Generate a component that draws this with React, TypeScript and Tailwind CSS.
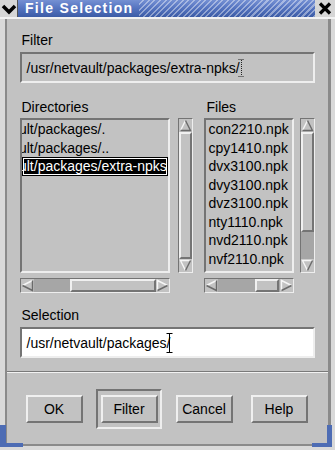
import React from 'react';

const FONT = "font-['Liberation_Sans',Arial,Helvetica,sans-serif]";
const sunken = 'border-2 border-t-[#747474] border-l-[#747474] border-b-[#eeeeee] border-r-[#eeeeee]';
const raised = 'border-2 border-t-[#f0f0f0] border-l-[#f0f0f0] border-b-[#747474] border-r-[#747474]';
const thinSunken = 'border border-t-[#747474] border-l-[#747474] border-b-[#eeeeee] border-r-[#eeeeee]';

type Dir = 'up' | 'down' | 'left' | 'right';

const ARROWS: Record<Dir, { fill: string; light: string; dark: string }> = {
  up: { fill: '6.5,1.5 1.5,11.5 11.5,11.5', light: '1.5,11.5 6.5,1.5', dark: '6.5,1.5 11.5,11.5 1.5,11.5' },
  down: { fill: '1.5,1.5 11.5,1.5 6.5,11.5', light: '6.5,11.5 1.5,1.5 11.5,1.5', dark: '11.5,1.5 6.5,11.5' },
  left: { fill: '1.5,6.5 11.5,1.5 11.5,11.5', light: '1.5,6.5 11.5,1.5', dark: '11.5,1.5 11.5,11.5 1.5,6.5' },
  right: { fill: '1.5,1.5 11.5,6.5 1.5,11.5', light: '1.5,11.5 1.5,1.5 11.5,6.5', dark: '11.5,6.5 1.5,11.5' },
};

function Arrow({ dir }: { dir: Dir }) {
  const a = ARROWS[dir];
  return (
    <svg width="13" height="13" viewBox="0 0 13 13" className="block shrink-0">
      <polygon points={a.fill} fill="#c2c2c2" />
      <polyline points={a.light} fill="none" stroke="#f6f6f6" strokeWidth="1.4" />
      <polyline points={a.dark} fill="none" stroke="#6a6a6a" strokeWidth="1.4" />
    </svg>
  );
}

function VScroll({ thumb }: { thumb: string }) {
  return (
    <div className={`w-[15px] h-[155px] flex flex-col bg-[#c2c2c2] ${thinSunken}`}>
      <Arrow dir="up" />
      <div className="flex-1 flex flex-col bg-[#a6a6a6]">
        <div className={`${thumb} bg-[#c2c2c2] ${raised}`} />
      </div>
      <Arrow dir="down" />
    </div>
  );
}

function HScroll({ width, lead, thumb }: { width: string; lead: string; thumb: string }) {
  return (
    <div className={`${width} h-[15px] flex bg-[#c2c2c2] ${thinSunken}`}>
      <Arrow dir="left" />
      <div className="flex-1 flex bg-[#a6a6a6]">
        <div className={lead} />
        <div className={`${thumb} bg-[#c2c2c2] ${raised}`} />
      </div>
      <Arrow dir="right" />
    </div>
  );
}

function Button({ label }: { label: string }) {
  return (
    <div className={`w-[57px] h-[28px] flex items-center justify-center bg-[#c2c2c2] ${raised}`}>
      {label}
    </div>
  );
}

const dirs = ['/usr/netvault/packages/.', '/usr/netvault/packages/..', '/usr/netvault/packages/extra-npks'];
const files = [
  'con2210.npk',
  'cpy1410.npk',
  'dvx3100.npk',
  'dvy3100.npk',
  'dvz3100.npk',
  'nty1110.npk',
  'nvd2110.npk',
  'nvf2110.npk',
];

export default function App() {
  return (
    <div className={`relative w-[335px] h-[450px] overflow-hidden bg-[#d9d9d9] flex flex-col text-black text-[14px] leading-[16px] ${FONT}`}>
      {/* Title bar */}
      <div className="h-[17px] flex shrink-0">
        <div className="w-[18px] bg-[#d6d6d6] border-r border-[#555] flex items-center justify-center">
          <svg width="16" height="12" viewBox="0 0 16 12">
            <polyline points="2,3 8,9 14,3" fill="none" stroke="#000" strokeWidth="3.5" />
          </svg>
        </div>
        <div className="flex-1 flex bg-gradient-to-b from-[#7590d3] via-[#5473bf] to-[#3c5ca6]">
          <div className="pl-[7px] pr-[6px] text-white font-bold tracking-[1.3px] leading-[17px]">File Selection</div>
          <div className="flex-1 bg-[repeating-linear-gradient(135deg,transparent_0px,transparent_2.5px,rgba(255,255,255,0.4)_2.5px,rgba(255,255,255,0.4)_4px)]" />
        </div>
        <div className="w-[20px] bg-[#d6d6d6] flex items-center justify-center">
          <svg width="14" height="13" viewBox="0 0 14 13">
            <path d="M2 1.5 L12 11.5 M12 1.5 L2 11.5" stroke="#000" strokeWidth="3.2" />
          </svg>
        </div>
      </div>
      <div className="h-[2px] bg-[#f2f2f2] shrink-0" />

      {/* Body */}
      <div className="flex-1 flex">
        <div className="w-[5px]" />
        <div className="flex-1 flex flex-col bg-[#c2c2c2] border-l-2 border-r-[3px] border-b-2 border-[#8a8a8a]">
          <div className="px-[13px] pt-[13px] flex flex-col">
            <div className="ml-[2px]">Filter</div>
            <div className={`mt-[4px] h-[31px] flex items-center pl-[5px] whitespace-nowrap ${sunken}`}>
              <span>/usr/netvault/packages/extra-npks/</span>
              <svg width="7" height="18" viewBox="0 0 7 18" className="ml-[-2px]">
                <path d="M0.5 0.5 H6.5 M3.5 1 V17 M0.5 17.5 H6.5" stroke="#222" strokeWidth="1" strokeDasharray="1 1" fill="none" />
              </svg>
            </div>

            <div className="mt-[16px] flex gap-[11px]">
              <div className="flex flex-col">
                <div className="ml-[2px]">Directories</div>
                <div className="mt-[3px] grid grid-cols-[150px_15px] gap-x-[8px] gap-y-[5px]">
                  <div className={`h-[155px] overflow-hidden bg-[#c2c2c2] ${sunken}`}>
                    {dirs.map((d, i) => (
                      <div
                        key={d}
                        className={
                          i === 2
                            ? 'h-[18.6px] leading-[18.6px] bg-black text-white shadow-[inset_0_0_0_1px_#000,inset_0_0_0_2px_#fff] overflow-hidden'
                            : 'h-[18.6px] leading-[18.6px] overflow-hidden'
                        }
                      >
                        <div className="ml-[-64px] whitespace-nowrap">{d}</div>
                      </div>
                    ))}
                  </div>
                  <VScroll thumb="flex-1" />
                  <HScroll width="w-[150px]" lead="w-[36px]" thumb="flex-1" />
                </div>
              </div>

              <div className="flex flex-col">
                <div className="ml-[3px]">Files</div>
                <div className="mt-[3px] grid grid-cols-[90px_15px] gap-x-[6px] gap-y-[5px]">
                  <div className={`h-[155px] overflow-hidden bg-[#c2c2c2] pl-[3px] ${sunken}`}>
                    {files.map((f) => (
                      <div key={f} className="h-[18.57px] leading-[18.57px] whitespace-nowrap">
                        {f}
                      </div>
                    ))}
                  </div>
                  <VScroll thumb="h-[100px]" />
                  <HScroll width="w-[90px]" lead="w-[37px]" thumb="w-[24px]" />
                </div>
              </div>
            </div>

            <div className="mt-[14px] ml-[2px]">Selection</div>
            <div className={`mt-[4px] h-[31px] flex items-center pl-[5px] bg-white whitespace-nowrap ${sunken}`}>
              <span>/usr/netvault/packages/</span>
              <svg width="7" height="20" viewBox="0 0 7 20" className="ml-[-4px]">
                <path d="M0.5 0.5 H6.5 M3.5 0.5 V19.5 M0.5 19.5 H6.5" stroke="#000" strokeWidth="1" fill="none" />
              </svg>
            </div>
          </div>

          {/* Separator */}
          <div className="mt-[13px] h-[2px] border-t border-t-[#7a7a7a] border-b border-b-[#f2f2f2]" />

          {/* Buttons */}
          <div className="flex-1 flex items-center">
            <div className="ml-[10px] grid grid-cols-[75px_75px_75px_75px] items-center">
              <div className="flex justify-center">
                <Button label="OK" />
              </div>
              <div className="flex justify-center">
                <div className={`w-[66px] h-[40px] flex items-center justify-center ${sunken}`}>
                  <Button label="Filter" />
                </div>
              </div>
              <div className="flex justify-center">
                <Button label="Cancel" />
              </div>
              <div className="flex justify-center">
                <Button label="Help" />
              </div>
            </div>
          </div>
        </div>
        <div className="w-[5px]" />
      </div>
      <div className="h-[4px] shrink-0" />

      {/* Window frame corner accents */}
      <div className="absolute left-0 top-[425px] w-[6px] h-[22px] bg-[#4d6cb4]" />
      <div className="absolute left-0 top-[443px] w-[23px] h-[4px] bg-[#4d6cb4]" />
      <div className="absolute left-[327px] top-[425px] w-[5px] h-[22px] bg-[#4d6cb4]" />
      <div className="absolute left-[312px] top-[443px] w-[20px] h-[4px] bg-[#4d6cb4]" />
    </div>
  );
}
